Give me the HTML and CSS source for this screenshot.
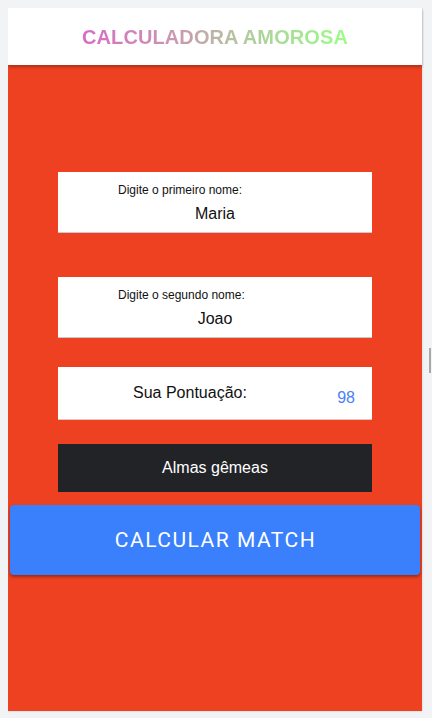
FILE: index.html
```html
<!DOCTYPE html>
<html lang="pt-BR">
<head>
<meta charset="utf-8">
<title>Calculadora Amorosa</title>
<link rel="stylesheet" href="styles.css">
</head>
<body>
<div class="app">
  <header class="topbar">
    <h1 class="title">CALCULADORA AMOROSA</h1>
  </header>
  <main class="stage">
    <div class="field field-first">
      <label class="field-label">Digite o primeiro nome:</label>
      <div class="field-value">Maria</div>
    </div>
    <div class="field field-second">
      <label class="field-label">Digite o segundo nome:</label>
      <div class="field-value">Joao</div>
    </div>
    <div class="score">
      <span class="score-label">Sua Pontuação:</span>
      <span class="score-value">98</span>
    </div>
    <div class="verdict">Almas gêmeas</div>
    <button class="match-btn">CALCULAR MATCH</button>
  </main>
</div>
<div class="scroll-thumb"></div>
</body>
</html>
```
FILE: styles.css
```css
html, body {
  height: 100%;
}
body {
  margin: 8px;
  background: #f1f3f4;
  font-family: "Liberation Sans", Arial, sans-serif;
  overflow: hidden;
}
.app {
  width: 414px;
  height: 703px;
  display: flex;
  flex-direction: column;
  box-shadow: 0 0 2px rgba(0,0,0,0.18);
}
.topbar {
  height: 57px;
  flex: none;
  background: #ffffff;
  display: flex;
  align-items: center;
  justify-content: center;
  position: relative;
  z-index: 1;
  box-shadow: 0 2px 3px rgba(0,0,0,0.28);
}
.title {
  margin: 0;
  font-size: 20px;
  font-weight: bold;
  letter-spacing: 0.1px;
  background: linear-gradient(90deg, #d86ac6 0%, #c99fab 40%, #b0c99e 60%, #9cfd88 100%);
  -webkit-background-clip: text;
  background-clip: text;
  color: transparent;
  padding-top: 1px;
}
.stage {
  flex: 1;
  background: #ee4121;
  display: flex;
  flex-direction: column;
  align-items: center;
  padding-top: 107px;
}
.field {
  width: 314px;
  height: 61px;
  background: #ffffff;
  border-bottom: 1px solid #c9c9c9;
  box-sizing: border-box;
  display: flex;
  flex-direction: column;
}
.field-second {
  margin-top: 44px;
}
.field-label {
  font-size: 12px;
  color: #111;
  padding-left: 60px;
  padding-top: 11px;
  line-height: 14px;
}
.field-value {
  font-size: 16px;
  color: #111;
  text-align: center;
  padding-top: 8px;
  line-height: 18px;
}
.score {
  margin-top: 29px;
  width: 314px;
  height: 53px;
  background: #ffffff;
  border-bottom: 1px solid #e5c4c0;
  box-sizing: border-box;
  display: flex;
  align-items: flex-start;
}
.score-label {
  font-size: 16px;
  color: #111;
  margin-left: 75px;
  padding-top: 17px;
  line-height: 18px;
}
.score-value {
  margin-left: auto;
  margin-right: 17px;
  font-size: 16px;
  color: #4a82f6;
  padding-top: 22px;
  line-height: 18px;
}
.verdict {
  margin-top: 24px;
  width: 314px;
  height: 48px;
  background: #222327;
  color: #ffffff;
  font-size: 16px;
  display: flex;
  align-items: center;
  justify-content: center;
}
.match-btn {
  margin-top: 13px;
  width: 410px;
  height: 70px;
  border: none;
  border-radius: 4px;
  background: #3a80fd;
  color: #ffffff;
  font-family: Roboto, "Liberation Sans", sans-serif;
  font-size: 21px;
  letter-spacing: 1.5px;
  padding: 0 0 0 1px;
  box-shadow: 0 2px 3px rgba(0,0,0,0.35);
  cursor: pointer;
}
.scroll-thumb {
  position: absolute;
  left: 429px;
  top: 348px;
  width: 2px;
  height: 25px;
  background: #a9a9a9;
}
```
